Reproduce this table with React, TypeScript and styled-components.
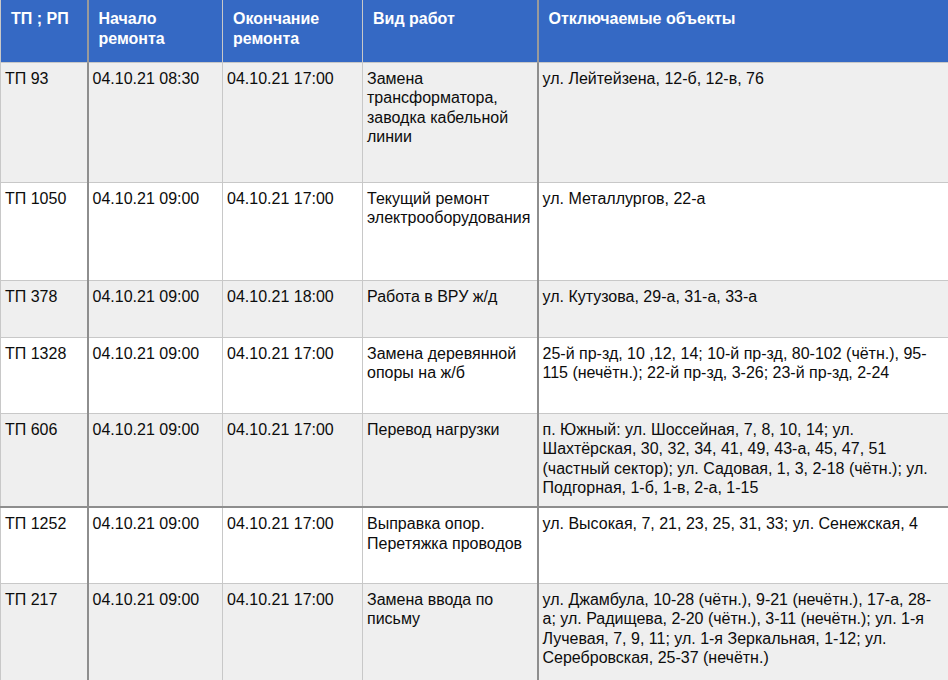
import React from "react";
import styled, { createGlobalStyle } from "styled-components";

type Outage = {
    station: string;
    start: string;
    end: string;
    work: string;
    objects: string;
    height: number;
    strongBottom?: boolean;
};

const rows: Outage[] = [
    {
        station: "ТП 93",
        start: "04.10.21 08:30",
        end: "04.10.21 17:00",
        work: "Замена трансформатора, заводка кабельной линии",
        objects: "ул. Лейтейзена, 12-б, 12-в, 76",
        height: 120,
    },
    {
        station: "ТП 1050",
        start: "04.10.21 09:00",
        end: "04.10.21 17:00",
        work: "Текущий ремонт электрооборудования",
        objects: "ул. Металлургов, 22-а",
        height: 98,
    },
    {
        station: "ТП 378",
        start: "04.10.21 09:00",
        end: "04.10.21 18:00",
        work: "Работа в ВРУ ж/д",
        objects: "ул. Кутузова, 29-а, 31-а, 33-а",
        height: 57,
    },
    {
        station: "ТП 1328",
        start: "04.10.21 09:00",
        end: "04.10.21 17:00",
        work: "Замена деревянной опоры на ж/б",
        objects:
            "25-й пр-зд, 10 ,12, 14; 10-й пр-зд, 80-102 (чётн.), 95-115 (нечётн.); 22-й пр-зд, 3-26; 23-й пр-зд, 2-24",
        height: 76,
    },
    {
        station: "ТП 606",
        start: "04.10.21 09:00",
        end: "04.10.21 17:00",
        work: "Перевод нагрузки",
        objects:
            "п. Южный: ул. Шоссейная, 7, 8, 10, 14; ул. Шахтёрская, 30, 32, 34, 41, 49, 43-а, 45, 47, 51 (частный сектор); ул. Садовая, 1, 3, 2-18 (чётн.); ул. Подгорная, 1-б, 1-в, 2-а, 1-15",
        height: 94,
        strongBottom: true,
    },
    {
        station: "ТП 1252",
        start: "04.10.21 09:00",
        end: "04.10.21 17:00",
        work: "Выправка опор. Перетяжка проводов",
        objects: "ул. Высокая, 7, 21, 23, 25, 31, 33; ул. Сенежская, 4",
        height: 76,
    },
    {
        station: "ТП 217",
        start: "04.10.21 09:00",
        end: "04.10.21 17:00",
        work: "Замена ввода по письму",
        objects:
            "ул. Джамбула, 10-28 (чётн.), 9-21 (нечётн.), 17-а, 28-а; ул. Радищева, 2-20 (чётн.), 3-11 (нечётн.); ул. 1-я Лучевая, 7, 9, 11; ул. 1-я Зеркальная, 1-12; ул. Серебровская, 25-37 (нечётн.)",
        height: 110,
    },
];

const App = () => {
    return (
        <>
            <GlobalStyle />
            <Table>
                <colgroup>
                    <col style={{ width: 87 }} />
                    <col style={{ width: 135 }} />
                    <col style={{ width: 140 }} />
                    <col style={{ width: 175 }} />
                    <col />
                </colgroup>
                <thead>
                    <tr>
                        <HeadCell $strongRight>ТП ; РП</HeadCell>
                        <HeadCell>Начало ремонта</HeadCell>
                        <HeadCell>Окончание ремонта</HeadCell>
                        <HeadCell $strongRight>Вид работ</HeadCell>
                        <HeadCell>Отключаемые объекты</HeadCell>
                    </tr>
                </thead>
                <tbody>
                    {rows.map((r, i) => (
                        <Row key={r.station} $shade={i % 2 === 0} $h={r.height} $strongBottom={r.strongBottom}>
                            <Cell $strongRight>{r.station}</Cell>
                            <Cell>{r.start}</Cell>
                            <Cell>{r.end}</Cell>
                            <Cell $strongRight>{r.work}</Cell>
                            <Cell>{r.objects}</Cell>
                        </Row>
                    ))}
                </tbody>
            </Table>
        </>
    );
};

const GlobalStyle = createGlobalStyle`
  html, body {
    margin: 0;
    padding: 0;
    background: #ffffff;
    overflow: hidden;
  }
  body {
    font-family: "Liberation Sans", Arial, sans-serif;
  }
`;

const Table = styled.table`
  width: 952px;
  border-collapse: collapse;
  table-layout: fixed;
  font-size: 16px;
  line-height: 19.6px;
  color: #0c0c0c;
`;

const HeadCell = styled.th<{ $strongRight?: boolean }>`
  height: 62px;
  box-sizing: border-box;
  background: #3569c4;
  color: #ffffff;
  font-weight: bold;
  text-align: left;
  vertical-align: top;
  padding: 9px 8px 2px 10px;
  border: 1px solid #c8c8c8;
  border-top: none;
  border-right: ${(p) => (p.$strongRight ? "2px solid #9a9a9a" : "1px solid #c8c8c8")};
`;

const Row = styled.tr<{ $shade: boolean; $h: number; $strongBottom?: boolean }>`
  height: ${(p) => p.$h}px;
  background: ${(p) => (p.$shade ? "#efefef" : "#ffffff")};
  & > td {
    border-bottom: ${(p) => (p.$strongBottom ? "2px solid #8e8e8e" : "1px solid #c8c8c8")};
  }
  & > td:last-child {
    padding-right: 12px;
  }
`;

const Cell = styled.td<{ $strongRight?: boolean }>`
  vertical-align: top;
  padding: 6px 3px 3px 4px;
  border-left: 1px solid #c8c8c8;
  border-top: 1px solid #c8c8c8;
  border-right: ${(p) => (p.$strongRight ? "2px solid #8e8e8e" : "1px solid #c8c8c8")};
  overflow-wrap: break-word;
`;

export default App;
